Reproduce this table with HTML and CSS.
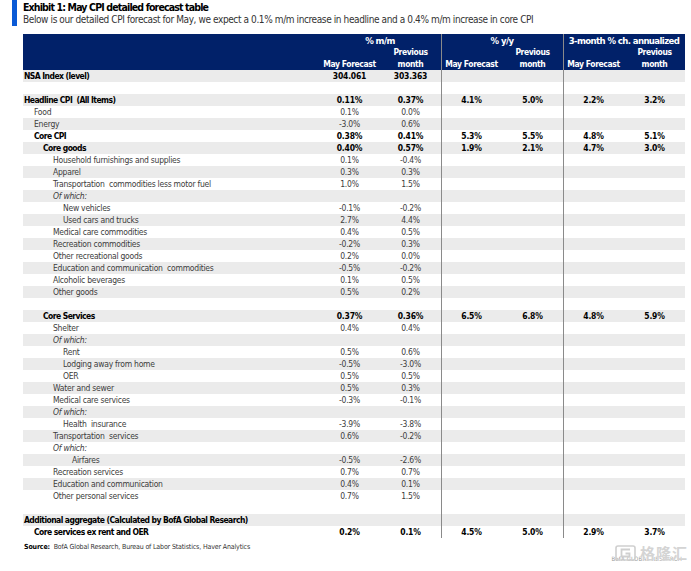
FILE: index.html
```html
<!DOCTYPE html>
<html>
<head>
<meta charset="utf-8">
<link rel="stylesheet" href="styles.css">
</head>
<body>
<div class="page">
  <div class="title-block">
    <div class="accent"></div>
    <div class="titles">
      <div class="title">Exhibit 1: May CPI detailed forecast table</div>
      <div class="subtitle">Below is our detailed CPI forecast for May, we expect a 0.1% m/m increase in headline and a 0.4% m/m increase in core CPI</div>
    </div>
  </div>

  <div class="table">
    <div class="head">
      <div class="h-label"></div>
      <div class="grp g1">% m/m</div>
      <div class="grp g2 sep">% y/y</div>
      <div class="grp g3 sep">3-month % ch. annualized</div>
      <div class="sub r2 c2"></div>
      <div class="sub r2 c3">Previous</div>
      <div class="sub r2 c4 sep"></div>
      <div class="sub r2 c5">Previous</div>
      <div class="sub r2 c6 sep"></div>
      <div class="sub r2 c7">Previous</div>
      <div class="sub r3 c2">May Forecast</div>
      <div class="sub r3 c3">month</div>
      <div class="sub r3 c4 sep">May Forecast</div>
      <div class="sub r3 c5">month</div>
      <div class="sub r3 c6 sep">May Forecast</div>
      <div class="sub r3 c7">month</div>
    </div>

    <div class="row alt b"><div class="lbl l0">NSA Index (level)</div><div class="v">304.061</div><div class="v">303.363</div><div class="v sep"></div><div class="v"></div><div class="v sep"></div><div class="v"></div></div>
    <div class="row"><div class="lbl"></div><div class="v"></div><div class="v"></div><div class="v sep"></div><div class="v"></div><div class="v sep"></div><div class="v"></div></div>
    <div class="row alt b"><div class="lbl l0">Headline CPI&nbsp; (All Items)</div><div class="v">0.11%</div><div class="v">0.37%</div><div class="v sep">4.1%</div><div class="v">5.0%</div><div class="v sep">2.2%</div><div class="v">3.2%</div></div>
    <div class="row"><div class="lbl l1">Food</div><div class="v">0.1%</div><div class="v">0.0%</div><div class="v sep"></div><div class="v"></div><div class="v sep"></div><div class="v"></div></div>
    <div class="row alt"><div class="lbl l1">Energy</div><div class="v">-3.0%</div><div class="v">0.6%</div><div class="v sep"></div><div class="v"></div><div class="v sep"></div><div class="v"></div></div>
    <div class="row b"><div class="lbl l1">Core CPI</div><div class="v">0.38%</div><div class="v">0.41%</div><div class="v sep">5.3%</div><div class="v">5.5%</div><div class="v sep">4.8%</div><div class="v">5.1%</div></div>
    <div class="row alt b"><div class="lbl l2">Core goods</div><div class="v">0.40%</div><div class="v">0.57%</div><div class="v sep">1.9%</div><div class="v">2.1%</div><div class="v sep">4.7%</div><div class="v">3.0%</div></div>
    <div class="row"><div class="lbl l3">Household furnishings and supplies</div><div class="v">0.1%</div><div class="v">-0.4%</div><div class="v sep"></div><div class="v"></div><div class="v sep"></div><div class="v"></div></div>
    <div class="row alt"><div class="lbl l3">Apparel</div><div class="v">0.3%</div><div class="v">0.3%</div><div class="v sep"></div><div class="v"></div><div class="v sep"></div><div class="v"></div></div>
    <div class="row"><div class="lbl l3">Transportation&nbsp; commodities less motor fuel</div><div class="v">1.0%</div><div class="v">1.5%</div><div class="v sep"></div><div class="v"></div><div class="v sep"></div><div class="v"></div></div>
    <div class="row alt"><div class="lbl l3 it">Of which:</div><div class="v"></div><div class="v"></div><div class="v sep"></div><div class="v"></div><div class="v sep"></div><div class="v"></div></div>
    <div class="row"><div class="lbl l4">New vehicles</div><div class="v">-0.1%</div><div class="v">-0.2%</div><div class="v sep"></div><div class="v"></div><div class="v sep"></div><div class="v"></div></div>
    <div class="row alt"><div class="lbl l4">Used cars and trucks</div><div class="v">2.7%</div><div class="v">4.4%</div><div class="v sep"></div><div class="v"></div><div class="v sep"></div><div class="v"></div></div>
    <div class="row"><div class="lbl l3">Medical care commodities</div><div class="v">0.4%</div><div class="v">0.5%</div><div class="v sep"></div><div class="v"></div><div class="v sep"></div><div class="v"></div></div>
    <div class="row alt"><div class="lbl l3">Recreation commodities</div><div class="v">-0.2%</div><div class="v">0.3%</div><div class="v sep"></div><div class="v"></div><div class="v sep"></div><div class="v"></div></div>
    <div class="row"><div class="lbl l3">Other recreational goods</div><div class="v">0.2%</div><div class="v">0.0%</div><div class="v sep"></div><div class="v"></div><div class="v sep"></div><div class="v"></div></div>
    <div class="row alt"><div class="lbl l3">Education and communication&nbsp; commodities</div><div class="v">-0.5%</div><div class="v">-0.2%</div><div class="v sep"></div><div class="v"></div><div class="v sep"></div><div class="v"></div></div>
    <div class="row"><div class="lbl l3">Alcoholic beverages</div><div class="v">0.1%</div><div class="v">0.5%</div><div class="v sep"></div><div class="v"></div><div class="v sep"></div><div class="v"></div></div>
    <div class="row alt"><div class="lbl l3">Other goods</div><div class="v">0.5%</div><div class="v">0.2%</div><div class="v sep"></div><div class="v"></div><div class="v sep"></div><div class="v"></div></div>
    <div class="row"><div class="lbl"></div><div class="v"></div><div class="v"></div><div class="v sep"></div><div class="v"></div><div class="v sep"></div><div class="v"></div></div>
    <div class="row alt b"><div class="lbl l2">Core Services</div><div class="v">0.37%</div><div class="v">0.36%</div><div class="v sep">6.5%</div><div class="v">6.8%</div><div class="v sep">4.8%</div><div class="v">5.9%</div></div>
    <div class="row"><div class="lbl l3">Shelter</div><div class="v">0.4%</div><div class="v">0.4%</div><div class="v sep"></div><div class="v"></div><div class="v sep"></div><div class="v"></div></div>
    <div class="row alt"><div class="lbl l3 it">Of which:</div><div class="v"></div><div class="v"></div><div class="v sep"></div><div class="v"></div><div class="v sep"></div><div class="v"></div></div>
    <div class="row"><div class="lbl l4">Rent</div><div class="v">0.5%</div><div class="v">0.6%</div><div class="v sep"></div><div class="v"></div><div class="v sep"></div><div class="v"></div></div>
    <div class="row alt"><div class="lbl l4">Lodging away from home</div><div class="v">-0.5%</div><div class="v">-3.0%</div><div class="v sep"></div><div class="v"></div><div class="v sep"></div><div class="v"></div></div>
    <div class="row"><div class="lbl l4">OER</div><div class="v">0.5%</div><div class="v">0.5%</div><div class="v sep"></div><div class="v"></div><div class="v sep"></div><div class="v"></div></div>
    <div class="row alt"><div class="lbl l3">Water and sewer</div><div class="v">0.5%</div><div class="v">0.3%</div><div class="v sep"></div><div class="v"></div><div class="v sep"></div><div class="v"></div></div>
    <div class="row"><div class="lbl l3">Medical care services</div><div class="v">-0.3%</div><div class="v">-0.1%</div><div class="v sep"></div><div class="v"></div><div class="v sep"></div><div class="v"></div></div>
    <div class="row alt"><div class="lbl l3 it">Of which:</div><div class="v"></div><div class="v"></div><div class="v sep"></div><div class="v"></div><div class="v sep"></div><div class="v"></div></div>
    <div class="row"><div class="lbl l4">Health&nbsp; insurance</div><div class="v">-3.9%</div><div class="v">-3.8%</div><div class="v sep"></div><div class="v"></div><div class="v sep"></div><div class="v"></div></div>
    <div class="row alt"><div class="lbl l3">Transportation&nbsp; services</div><div class="v">0.6%</div><div class="v">-0.2%</div><div class="v sep"></div><div class="v"></div><div class="v sep"></div><div class="v"></div></div>
    <div class="row"><div class="lbl l3 it">Of which:</div><div class="v"></div><div class="v"></div><div class="v sep"></div><div class="v"></div><div class="v sep"></div><div class="v"></div></div>
    <div class="row alt"><div class="lbl l5">Airfares</div><div class="v">-0.5%</div><div class="v">-2.6%</div><div class="v sep"></div><div class="v"></div><div class="v sep"></div><div class="v"></div></div>
    <div class="row"><div class="lbl l3">Recreation services</div><div class="v">0.7%</div><div class="v">0.7%</div><div class="v sep"></div><div class="v"></div><div class="v sep"></div><div class="v"></div></div>
    <div class="row alt"><div class="lbl l3">Education and communication</div><div class="v">0.4%</div><div class="v">0.1%</div><div class="v sep"></div><div class="v"></div><div class="v sep"></div><div class="v"></div></div>
    <div class="row"><div class="lbl l3">Other personal services</div><div class="v">0.7%</div><div class="v">1.5%</div><div class="v sep"></div><div class="v"></div><div class="v sep"></div><div class="v"></div></div>
    <div class="row"><div class="lbl"></div><div class="v"></div><div class="v"></div><div class="v sep"></div><div class="v"></div><div class="v sep"></div><div class="v"></div></div>
    <div class="row alt b"><div class="lbl l0">Additional aggregate (Calculated by BofA Global Research)</div><div class="v"></div><div class="v"></div><div class="v sep"></div><div class="v"></div><div class="v sep"></div><div class="v"></div></div>
    <div class="row b"><div class="lbl l1">Core services ex rent and OER</div><div class="v">0.2%</div><div class="v">0.1%</div><div class="v sep">4.5%</div><div class="v">5.0%</div><div class="v sep">2.9%</div><div class="v">3.7%</div></div>
  </div>

  <div class="footer">
    <div class="source"><span class="src-b">Source:</span>&nbsp; BofA Global Research, Bureau of Labor Statistics, Haver Analytics</div>
    <div class="brand">BofA GLOBAL RESEARCH</div>
  </div>

  <div class="watermark">
    <svg class="wm-logo" width="21" height="16" viewBox="0 0 21 16">
      <rect x="1" y="1" width="19" height="14" rx="2" fill="none" stroke="#cfcfcf" stroke-width="1.6"/>
      <path d="M15 4.5H6.5V11.5H14.5V8.5H10.5" fill="none" stroke="#cfcfcf" stroke-width="1.8"/>
    </svg>
    <span class="wm-text">格隆汇</span>
  </div>
</div>
</body>
</html>
```

FILE: styles.css
```css
html, body {
  margin: 0;
  padding: 0;
  background: #ffffff;
}

body {
  font-family: "DejaVu Sans Condensed", "DejaVu Sans", sans-serif;
  font-stretch: condensed;
  color: #000;
}

.page {
  position: relative;
  width: 679px;
  height: 571px;
  padding-left: 12px;
}

.title-block {
  display: flex;
  height: 26px;
}

.accent {
  width: 5px;
  background: #0a5ad6;
}

.titles {
  padding-left: 6px;
  white-space: nowrap;
}

.title {
  font-weight: bold;
  font-size: 10.5px;
  line-height: 13px;
  letter-spacing: -0.85px;
  padding-top: 1px;
}

.subtitle {
  font-size: 10px;
  line-height: 12px;
  color: #333;
  letter-spacing: -0.4px;
}

.table {
  margin-top: 8px;
  margin-left: 11px;
  width: 662px;
}

.head {
  display: grid;
  grid-template-columns: 296px repeat(6, 61px);
  grid-template-rows: repeat(3, 12px);
  background: #012169;
  color: #fff;
  font-weight: bold;
  line-height: 12px;
  text-align: center;
  white-space: nowrap;
}

.h-label {
  grid-column: 1;
  grid-row: 1 / 4;
}

.grp {
  grid-row: 1;
  font-size: 9.5px;
  line-height: 13px;
  letter-spacing: -0.6px;
}

.g1 { grid-column: 2 / 4; }
.g2 { grid-column: 4 / 6; }
.g3 { grid-column: 6 / 8; }

.sub {
  font-size: 8.5px;
  letter-spacing: -0.4px;
}

.r2 { grid-row: 2; }
.r3 { grid-row: 3; }
.c2 { grid-column: 2; }
.c3 { grid-column: 3; }
.c4 { grid-column: 4; }
.c5 { grid-column: 5; }
.c6 { grid-column: 6; }
.c7 { grid-column: 7; }

.sep {
  box-shadow: inset 1px 0 0 #8a8a8a;
}

.row {
  display: grid;
  grid-template-columns: 296px repeat(6, 61px);
  height: 12px;
  line-height: 12px;
  font-size: 8.5px;
  color: #3c3c3c;
  white-space: nowrap;
}

.row.alt {
  background: #ebebeb;
}

.row.b {
  font-weight: bold;
  color: #000;
}

.lbl {
  letter-spacing: -0.25px;
}

.row.b .lbl {
  letter-spacing: -0.55px;
}

.it { font-style: italic; }

.l0 { padding-left: 1px; }
.l1 { padding-left: 11px; }
.l2 { padding-left: 20px; }
.l3 { padding-left: 30px; }
.l4 { padding-left: 40px; }
.l5 { padding-left: 49px; }

.v {
  text-align: center;
  letter-spacing: -0.2px;
}

.footer {
  display: flex;
  justify-content: space-between;
  margin-left: 12px;
  width: 662px;
  margin-top: 5px;
}

.source {
  font-size: 7px;
  line-height: 9px;
  color: #333;
  letter-spacing: -0.15px;
}

.src-b {
  font-weight: bold;
  color: #000;
}

.brand {
  font-size: 6px;
  line-height: 8px;
  color: #9a9a9a;
  margin-top: 12px;
  margin-right: 4px;
  letter-spacing: 0.2px;
}

.watermark {
  position: absolute;
  right: 3px;
  bottom: 10px;
  display: flex;
  align-items: center;
  gap: 4px;
}

.wm-text {
  font-family: "Noto Sans CJK SC", sans-serif;
  font-size: 15px;
  line-height: 16px;
  font-weight: bold;
  color: #d4d4d4;
  letter-spacing: 1px;
  text-shadow: 0 0 1px #ffffff;
}
```
